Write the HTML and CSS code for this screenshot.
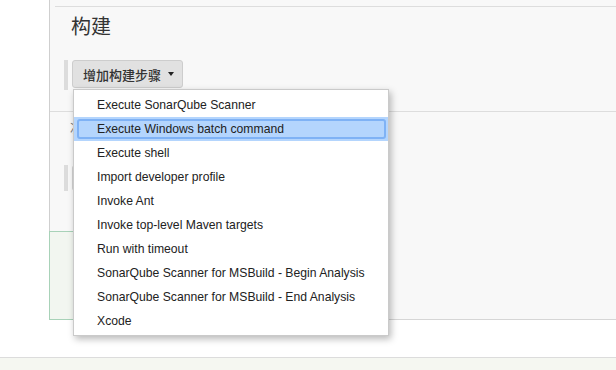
FILE: index.html
```html
<!DOCTYPE html>
<html lang="zh">
<head>
<meta charset="utf-8">
<title>构建</title>
<link rel="stylesheet" href="styles.css">
</head>
<body>
<div class="panel">
  <div class="rule-top"></div>
  <h2 class="title">构建</h2>
  <div class="step">
    <span class="stripe"></span>
    <button class="add-btn">增加构建步骤 <span class="caret"></span></button>
  </div>
  <div class="rule-mid"></div>
  <div class="hint">次</div>
  <div class="step step-second">
    <span class="stripe"></span>
    <span class="ghost-btn"></span>
  </div>
  <div class="green-box"></div>
</div>
<div class="footer"></div>

<ul class="menu">
  <li class="item"><span class="item-inner">Execute SonarQube Scanner</span></li>
  <li class="item active"><span class="item-inner">Execute Windows batch command</span></li>
  <li class="item"><span class="item-inner">Execute shell</span></li>
  <li class="item"><span class="item-inner">Import developer profile</span></li>
  <li class="item"><span class="item-inner">Invoke Ant</span></li>
  <li class="item"><span class="item-inner">Invoke top-level Maven targets</span></li>
  <li class="item"><span class="item-inner">Run with timeout</span></li>
  <li class="item"><span class="item-inner">SonarQube Scanner for MSBuild - Begin Analysis</span></li>
  <li class="item"><span class="item-inner">SonarQube Scanner for MSBuild - End Analysis</span></li>
  <li class="item"><span class="item-inner">Xcode</span></li>
</ul>
</body>
</html>
```

FILE: styles.css
```css
html, body {
  margin: 0;
  padding: 0;
}
body {
  width: 616px;
  height: 370px;
  overflow: hidden;
  position: relative;
  background: #ffffff;
  font-family: "Liberation Sans", Arial, "Noto Sans CJK SC", sans-serif;
  color: #333;
}

.panel {
  margin-left: 49px;
  height: 320px;
  box-sizing: border-box;
  border-left: 1px solid #cfcfcf;
  border-bottom: 1px solid #d6d6d6;
  background: #f8f8f8;
  display: flex;
  flex-direction: column;
}

.rule-top {
  margin: 6px 0 0 5px;
  border-top: 1px solid #dddddd;
}

.title {
  margin: 6px 0 0 21px;
  height: 26px;
  line-height: 26px;
  font-family: "Noto Sans CJK SC", sans-serif;
  font-size: 20px;
  font-weight: 400;
  color: #333;
}

.step {
  display: flex;
  align-items: flex-start;
  gap: 4px;
  margin: 21px 0 0 14px;
}
.stripe {
  display: block;
  width: 4px;
  height: 30px;
  background: #dcdcdc;
}
.add-btn {
  height: 28px;
  width: 111px;
  box-sizing: border-box;
  padding: 0 0 0 10px;
  margin: 0;
  border: 1px solid #cdcdcd;
  border-radius: 3px;
  background: #e1e1e1;
  font-family: "Noto Sans CJK SC", sans-serif;
  font-size: 13px;
  font-weight: 500;
  color: #333;
  text-align: left;
  display: flex;
  align-items: center;
  gap: 5px;
}
.caret {
  display: inline-block;
  width: 0;
  height: 0;
  border-left: 3.5px solid transparent;
  border-right: 3.5px solid transparent;
  border-top: 4px solid #222;
  margin-left: 2px;
}

.rule-mid {
  margin-top: 21px;
  border-top: 1px solid #dddddd;
}

.hint {
  margin: 8px 0 0 20px;
  height: 16px;
  line-height: 16px;
  font-family: "Noto Sans CJK SC", sans-serif;
  font-size: 12px;
  color: #777;
}

.step-second {
  margin-top: 29px;
}
.step-second .stripe {
  height: 26px;
}
.ghost-btn {
  display: block;
  width: 111px;
  height: 26px;
  box-sizing: border-box;
  border: 1px solid #d2d2d2;
  border-radius: 3px;
  background: #e4e4e4;
}

.green-box {
  margin: auto 0 -1px -1px;
  width: 300px;
  height: 89px;
  box-sizing: border-box;
  border: 1px solid #a8d2b8;
  background: #f2f6f0;
}

.footer {
  position: absolute;
  left: 0;
  right: 0;
  top: 357px;
  bottom: 0;
  border-top: 1px solid #dcdcdc;
  background: #f5f7f1;
}

.menu {
  position: absolute;
  left: 73px;
  top: 89px;
  width: 316px;
  box-sizing: border-box;
  margin: 0;
  padding: 3px 0 2px;
  list-style: none;
  background: #ffffff;
  border: 1px solid #cacaca;
  box-shadow: 2px 3px 7px rgba(0, 0, 0, 0.28);
  font-family: "Liberation Sans", Arial, sans-serif;
  font-size: 12.2px;
  color: #222;
}
.item {
  height: 24px;
  box-sizing: border-box;
  padding: 2px 2px 2px 3px;
}
.item-inner {
  display: block;
  height: 20px;
  box-sizing: border-box;
  line-height: 16px;
  padding-left: 18px;
  border: 2px solid transparent;
  border-radius: 3px;
  white-space: nowrap;
}
.item.active {
  background: #b4d5fd;
}
.item.active .item-inner {
  border-color: #7fb2f5;
}
```
